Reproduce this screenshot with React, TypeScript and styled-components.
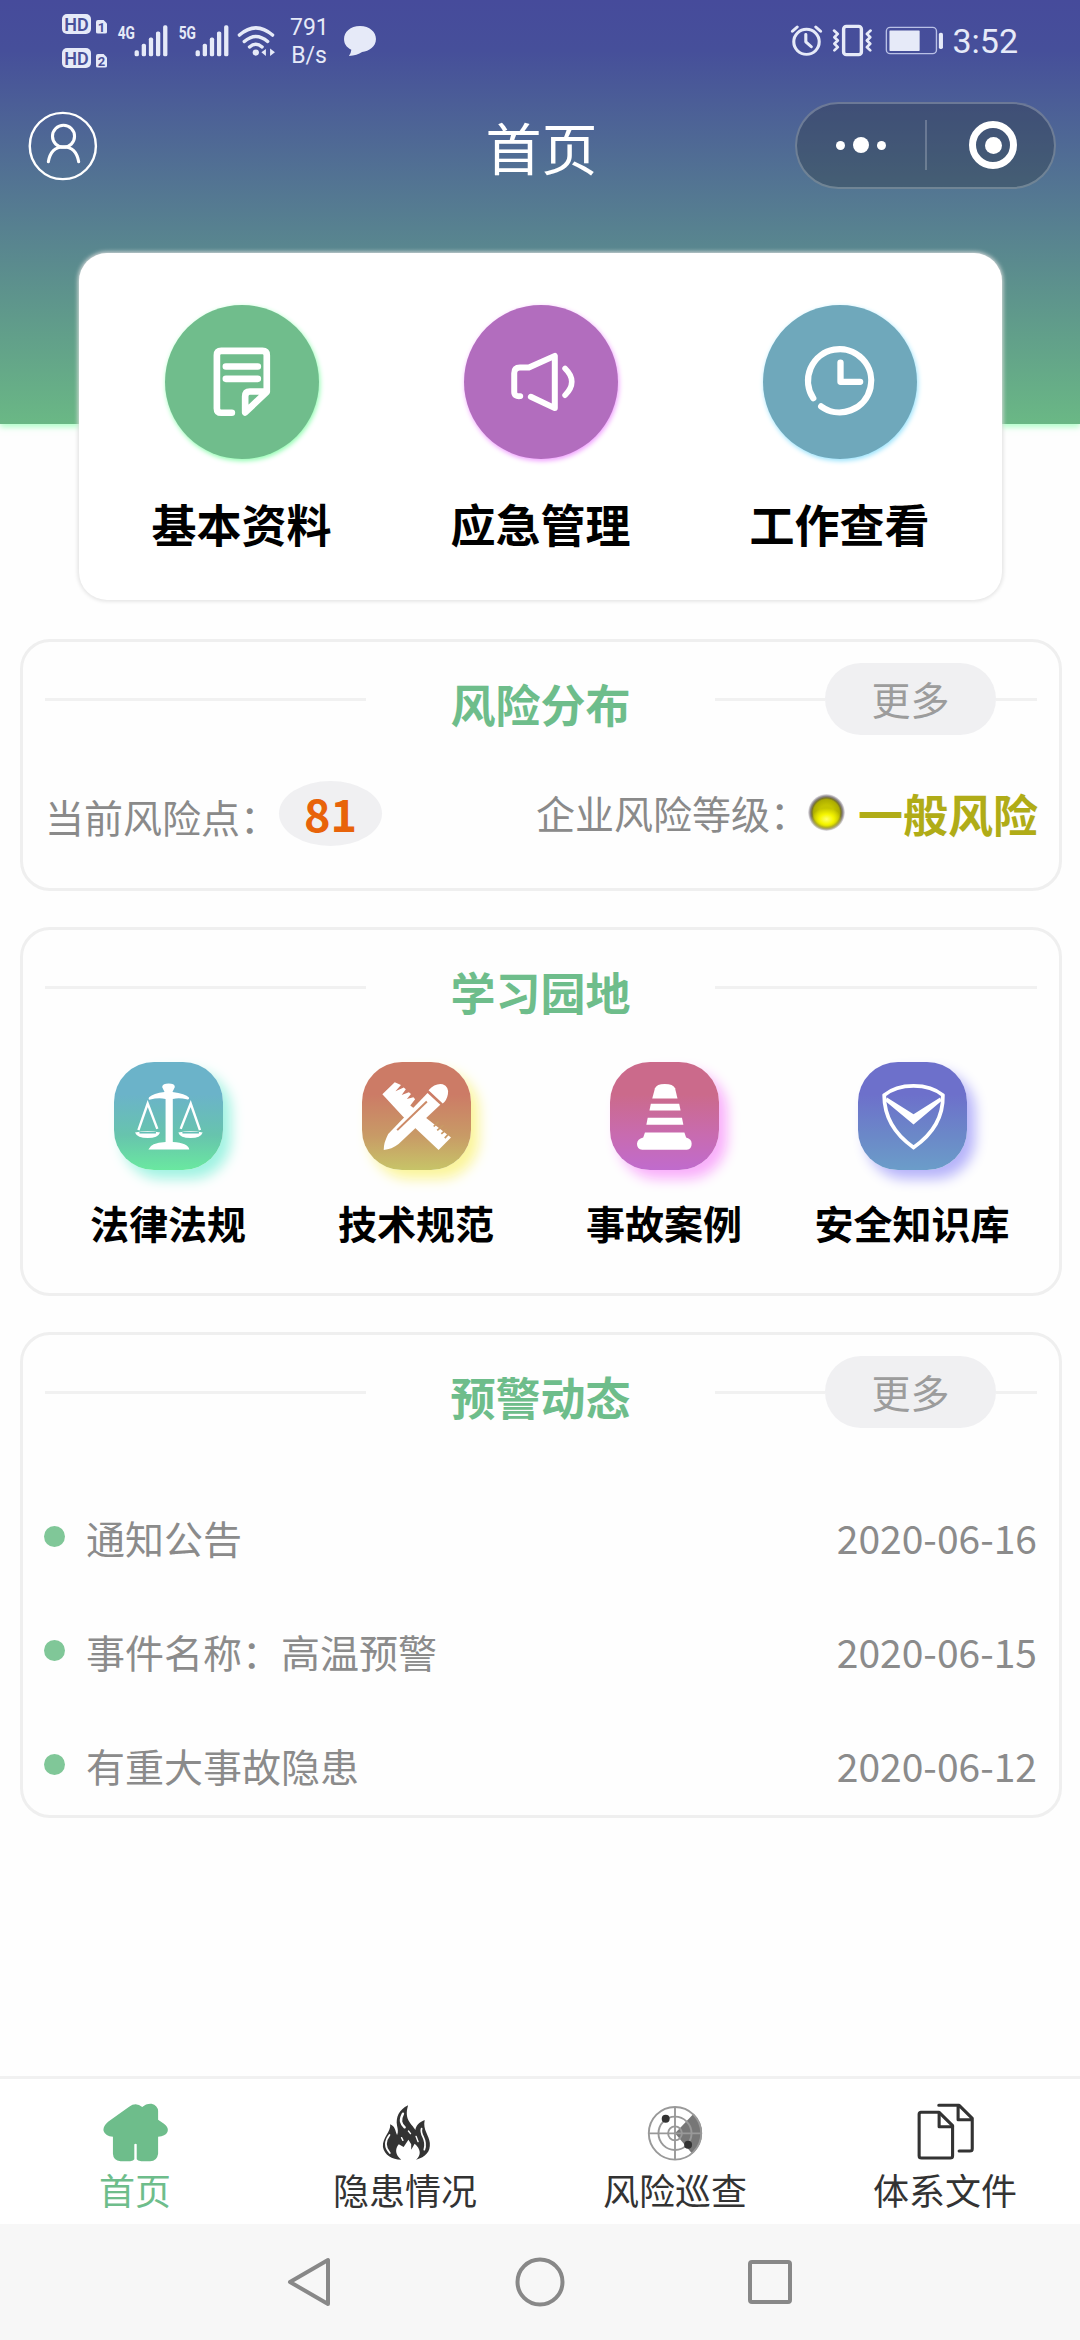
import React from "react";
import styled, { createGlobalStyle } from "styled-components";

const GREEN = "#6ebd8b";

const GlobalStyle = createGlobalStyle`
  * { box-sizing: border-box; }
  body {
    margin: 0;
    background: #fefefe;
    font-family: "Noto Sans CJK SC", "Noto Sans", sans-serif;
  }
`;

const Page = styled.div`
  width: 1080px;
  height: 2340px;
  display: flex;
  flex-direction: column;
  background: #fefefe;
  overflow: hidden;
`;

/* ---------- header ---------- */

const Header = styled.header`
  flex: none;
  height: 424px;
  background: linear-gradient(180deg, #464b9b 0%, #464f9a 12%, #6ab885 100%);
  box-shadow: 0 3px 6px rgba(140, 255, 175, 0.7);
`;

const StatusBar = styled.div`
  height: 81px;
  padding: 0 62px;
  display: flex;
  justify-content: space-between;
  align-items: center;
  color: #e6eaf8;
  font-family: Roboto, sans-serif;
`;

const StatusGroup = styled.div`
  display: flex;
  align-items: center;
`;

const StatusIcon = styled.svg.attrs({ preserveAspectRatio: "none" })<{ $gap?: number }>`
  display: block;
  flex: none;
  overflow: visible;
  margin-left: ${(p) => p.$gap ?? 0}px;
`;

const HdStack = styled.div`
  display: flex;
  flex-direction: column;
  gap: 14px;
`;

const HdRow = styled.div`
  display: flex;
  align-items: flex-end;
  gap: 5px;
  height: 20px;
`;

const HdBadge = styled.span`
  width: 29px;
  height: 20px;
  border-radius: 5px;
  background: #e6eaf8;
  color: #4a5199;
  font-size: 18px;
  font-weight: 600;
  line-height: 21px;
  text-align: center;
`;

const SimBadge = styled.span`
  width: 11px;
  height: 14px;
  border-radius: 2px;
  background: #e6eaf8;
  clip-path: polygon(0 0, 65% 0, 100% 28%, 100% 100%, 0 100%);
  color: #4a5199;
  font-size: 13px;
  font-weight: 700;
  line-height: 15px;
  text-align: center;
`;

const NetSpeed = styled.div`
  width: 38px;
  margin-left: 14px;
  padding-top: 2px;
  font-size: 23px;
  line-height: 28px;
  text-align: center;
`;

const Clock = styled.span`
  margin-left: 8px;
  font-size: 34px;
  line-height: 40px;
`;

const NavBar = styled.div`
  display: grid;
  grid-template-columns: 1fr auto 1fr;
  align-items: center;
  height: 130px;
  padding: 0 24px 0 27px;
`;

const Title = styled.h1`
  margin: 0;
  color: #fff;
  font-size: 56px;
  font-weight: 400;
  line-height: 80px;
`;

const Capsule = styled.div`
  justify-self: end;
  display: grid;
  grid-template-columns: 1fr 2px 1fr;
  align-items: center;
  justify-items: center;
  width: 261px;
  height: 87px;
  margin-bottom: 2px;
  border: 2px solid rgba(255, 255, 255, 0.24);
  border-radius: 44px;
  background: rgba(40, 50, 55, 0.33);
`;

const CapsuleDivider = styled.i`
  width: 2px;
  height: 50px;
  background: rgba(255, 255, 255, 0.22);
`;

const Dots = styled.div`
  display: flex;
  align-items: center;
  gap: 8px;
  &::before, &::after, i {
    content: "";
    width: 9px;
    height: 9px;
    border-radius: 50%;
    background: #fff;
  }
  i { width: 16px; height: 16px; }
`;

const Target = styled.div`
  display: flex;
  align-items: center;
  justify-content: center;
  width: 48px;
  height: 48px;
  margin-left: 6px;
  border: 7px solid #fff;
  border-radius: 50%;
  &::after {
    content: "";
    width: 17px;
    height: 17px;
    border-radius: 50%;
    background: #fff;
  }
`;

/* ---------- quick entries ---------- */

const QuickCard = styled.section`
  flex: none;
  display: grid;
  grid-template-columns: repeat(3, 299px);
  justify-content: center;
  width: 923px;
  height: 347px;
  margin: -171px auto 0 79px;
  padding-top: 52px;
  border-radius: 28px;
  background: #fff;
  box-shadow: 0 0 4px 1px #dedede;
`;

const QuickItem = styled.div`
  display: flex;
  flex-direction: column;
  align-items: center;
`;

const QuickDisc = styled.div<{ $color: string; $glow: string }>`
  width: 154px;
  height: 154px;
  border-radius: 50%;
  background: ${(p) => p.$color};
  box-shadow: 1px 2px 5px ${(p) => p.$glow};
`;

const QuickLabel = styled.span`
  margin-top: 35px;
  color: #000;
  font-size: 45px;
  font-weight: 700;
  line-height: 60px;
`;

/* ---------- cards ---------- */

const Card = styled.section<{ $height: number; $top: number }>`
  flex: none;
  width: 1042px;
  height: ${(p) => p.$height}px;
  margin: ${(p) => p.$top}px 0 0 20px;
  padding: 21px 22px 0;
  border: 3px solid #efefef;
  border-radius: 30px;
  background: #fefefe;
`;

const CardHead = styled.div`
  display: grid;
  grid-template-columns: 321px 1fr 322px;
  align-items: center;
  height: 72px;
`;

const Rule = styled.i`
  flex: 1;
  height: 3px;
  background: #f1f1f1;
`;

const RuleEnd = styled(Rule)`
  flex: 0 0 41px;
`;

const CardTitle = styled.h2`
  margin: 0;
  padding-top: 9px;
  color: ${GREEN};
  font-size: 45px;
  font-weight: 700;
  line-height: 60px;
  text-align: center;
`;

const HeadRight = styled.div`
  display: flex;
  align-items: center;
`;

const MoreButton = styled.button`
  width: 171px;
  height: 72px;
  padding: 0 0 2px;
  border: 0;
  border-radius: 36px;
  background: #f0f0f2;
  color: #9c9c9c;
  font: inherit;
  font-size: 39px;
  line-height: 70px;
`;

const RiskRow = styled.div`
  display: flex;
  align-items: center;
  height: 65px;
  margin-top: 46px;
`;

const RiskLabel = styled.span<{ $drop: number }>`
  padding-top: ${(p) => p.$drop}px;
  color: #8a8a8a;
  font-size: 39px;
  line-height: 50px;
`;

const RiskCount = styled.span`
  width: 103px;
  height: 65px;
  border-radius: 50%;
  background: #f0f0f2;
  color: #e8630a;
  font-size: 45px;
  font-weight: 700;
  line-height: 63px;
  text-align: center;
`;

const RiskLevel = styled.div`
  display: flex;
  align-items: center;
  margin-left: auto;
  margin-right: -1px;
  padding-bottom: 3px;
`;

const Lamp = styled.i`
  width: 37px;
  height: 37px;
  margin: 1px 13px 0 -1px;
  border-radius: 50%;
  background: radial-gradient(ellipse 42% 30% at 50% 68%, #ffff70 0%, #f6f600 45%, rgba(220, 220, 0, 0) 100%),
    radial-gradient(circle closest-side at 50% 50%, #c4c400 0 40%, #adad00 70%, #77732c 79%, #8d878d 88%, rgba(200, 195, 200, 0.25) 100%);
`;

const RiskText = styled.strong`
  padding-top: 3px;
  color: #b0ac17;
  font-size: 45px;
  font-weight: 700;
  line-height: 60px;
`;

const StudyGrid = styled.div`
  display: grid;
  grid-template-columns: repeat(4, 248px);
`;

const StudyBlock = styled(StudyGrid)`
  margin: 39px 0 0 -1px;
`;

const StudyItem = styled.div`
  display: flex;
  flex-direction: column;
  align-items: center;
`;

const StudyTile = styled.div<{ $from: string; $mid: string; $to: string; $glow: string }>`
  width: 109px;
  height: 108px;
  border-radius: 40px;
  background: linear-gradient(180deg, ${(p) => p.$from} 0%, ${(p) => p.$from} 30%, ${(p) => p.$mid} 68%, ${(p) => p.$to} 100%);
  box-shadow: 8px 9px 13px ${(p) => p.$glow};
`;

const TileIcon = styled.svg.attrs({ preserveAspectRatio: "none" })`
  display: block;
  width: 109px;
  height: 108px;
`;

const StudyLabel = styled.span`
  margin-top: 28px;
  color: #000;
  font-size: 39px;
  font-weight: 700;
  line-height: 48px;
`;

const NoticeList = styled.ul`
  display: flex;
  flex-direction: column;
  gap: 54px;
  margin: 79px 0 0;
  padding: 0;
  list-style: none;
`;

const Notice = styled.li`
  display: flex;
  align-items: center;
  height: 60px;
  color: #8b8b8b;
  font-size: 39px;
  line-height: 60px;
  &::before {
    content: "";
    width: 21px;
    height: 21px;
    margin: 0 21px 2px -1px;
    border-radius: 50%;
    background: #80c798;
  }
`;

const NoticeDate = styled.time`
  margin-left: auto;
`;

/* ---------- bottom bars ---------- */

const TabBar = styled.nav`
  flex: none;
  display: grid;
  grid-template-columns: repeat(4, 1fr);
  height: 148px;
  margin-top: auto;
  border-top: 3px solid #f1f1f1;
  background: #fff;
`;

const Tab = styled.div<{ $active?: boolean }>`
  display: flex;
  flex-direction: column;
  align-items: center;
  padding-top: 24px;
  color: ${(p) => (p.$active ? GREEN : "#333")};
  font-size: 36px;
  line-height: 44px;
`;

const TabIcon = styled.svg.attrs({ preserveAspectRatio: "none" })`
  display: block;
  width: 70px;
  height: 60px;
  margin-bottom: 4px;
`;

const SystemBar = styled.div`
  flex: none;
  display: flex;
  justify-content: center;
  align-items: center;
  gap: 180px;
  height: 116px;
  background: #f7f7f7;
`;

/* ---------- drawings ---------- */

const Signal = ({ label, gap }: { label: string; gap: number }) => (
  <StatusIcon $gap={gap} width="51" height="33" viewBox="340 70 148 98" fill="#e6eaf8">
    <text x="342" y="115" fontSize="54" fontWeight="700" textLength="50" lengthAdjust="spacingAndGlyphs">
      {label}
    </text>
    {[148, 129, 110, 92, 74].map((top, i) => (
      <rect key={top} x={391 + i * 20.7} y={top} width="12.5" height={166 - top} rx="5" />
    ))}
  </StatusIcon>
);

const stroke = (width: number, color = "#fff") => ({
  fill: "none",
  stroke: color,
  strokeWidth: width,
  strokeLinecap: "round" as const,
  strokeLinejoin: "round" as const,
});

const DocIcon = () => (
  <svg width="154" height="154" viewBox="315 225 463 463" {...stroke(20)}>
    <path d="M516 549H484Q471 549 471 536V376Q471 363 484 363H608Q621 363 621 376V486L556 548V500Q556 485 570 485H618" />
    <path d="M498 410H594M498 447H594" />
  </svg>
);

const HornIcon = () => (
  <svg width="154" height="154" viewBox="1212 225 463 463" {...stroke(18)}>
    <path d="M1381 499Q1363 501 1363 486V430Q1363 413 1380 413H1407L1485 378V535L1413 501" />
    <path d="M1516 416Q1556 455 1516 496" strokeWidth="17" />
  </svg>
);

const ClockIcon = () => (
  <svg width="154" height="154" viewBox="610 225 463 463" {...stroke(19)}>
    <path d="M761 505A95 95 0 1 1 785 530" />
    <path d="M843 398V456H902" />
  </svg>
);

const ScaleIcon = () => (
  <TileIcon viewBox="330 455 317 325" fill="#fff">
    <path d="M470 530Q472 520 489 520Q506 520 507 530L500 545Q538 550 548 562Q550 570 541 567Q520 562 501 566V696Q545 699 549 718H430Q436 699 480 696V566Q458 562 436 568Q428 570 432 561Q444 549 477 545Z" />
    <path d="M401 660L428 580L456 656M524 656L553 580L580 660" fill="none" stroke="#fff" strokeWidth="7" />
    <path d="M391 667Q428 660 464 667Q458 684 428 684Q398 684 391 667ZM517 667Q553 660 588 667Q582 684 553 684Q522 684 517 667Z" />
    <path d="M404 668H452M529 668H577" stroke="#62beb6" strokeWidth="4" />
  </TileIcon>
);

const ToolsIcon = () => (
  <TileIcon viewBox="1050 455 316 325" fill="#fff">
    <path d="M1109 552L1145 516L1163 524L1147 543L1171 532L1177 537L1165 554L1186 546L1192 551L1180 566L1199 561L1204 567L1190 586L1308 682L1272 720L1168 618Z" />
    <path d="M1286 645L1268 661M1296 656L1280 671M1303 669L1290 684M1272 634L1258 649" stroke="#c99a66" strokeWidth="5" />
    <path d="M1240 548L1277 584L1156 702Q1136 718 1113 720Q1112 700 1126 672Z" />
    <path d="M1243 540Q1262 518 1284 522Q1303 530 1299 552Q1296 570 1284 580Z" />
    <path d="M1152 660L1238 574" stroke="#cc8a67" strokeWidth="6" />
  </TileIcon>
);

const ConeIcon = () => (
  <TileIcon viewBox="203 455 315 325" fill="#fff">
    <path d="M325 565L333 534Q338 521 361 521Q386 521 391 534L398 565Z" />
    <path d="M321 581H403L407 601H317ZM312 623H411L415 644H308Z" />
    <path d="M304 667H418L423 682Q439 686 439 701Q439 718 425 719H296Q281 718 281 701Q282 686 299 682Z" />
  </TileIcon>
);

const ShieldIcon = () => (
  <TileIcon viewBox="922 455 316 325">
    <path d="M998 555Q1030 527 1083 527Q1136 527 1168 555Q1170 650 1083 712Q998 650 998 555Z" {...stroke(11)} strokeLinejoin="miter" />
    <path d="M1006 562L1083 612L1160 562L1164 572L1083 643L1001 572Z" fill="#fff" />
  </TileIcon>
);

const HomeIcon = () => (
  <TabIcon viewBox="290.5 128 203 180" fill={GREEN}>
    <path d="M375 139Q395 124 413 140Q424 129 440 130Q458 135 459 152V178L476 190Q491 202 486 215Q480 228 459 229V280Q456 302 436 303H410Q399 301 397 297V252Q394 248 390 252V297Q388 301 378 303H350Q329 300 328 280V229Q306 228 301 212Q298 199 314 184Z" />
  </TabIcon>
);

const FireIcon = () => (
  <TabIcon viewBox="1074.5 128 203 180" fill="#333">
    <path d="M1185 135C1158 148 1149 172 1153 196C1155 206 1157 214 1153 224C1148 214 1148 198 1133 192C1136 214 1110 232 1112 260C1116 284 1138 298 1165 298C1148 284 1146 266 1158 252L1172 260L1186 238L1194 252V268L1204 250C1222 266 1224 284 1208 298C1236 290 1250 274 1248 248C1246 224 1227 210 1233 179C1216 186 1208 196 1206 209C1196 190 1172 180 1185 135Z" />
    <g fill="none" stroke="#fff" strokeLinecap="round" strokeWidth="5">
      <path d="M1170 160C1160 180 1164 190 1175 201" strokeWidth="7" />
      <path d="M1131 224C1116 244 1118 262 1132 278" />
      <path d="M1224 205C1218 226 1243 236 1232 268" />
      <path d="M1166 232L1170 240M1186 212L1192 220M1208 228L1214 244" strokeWidth="4" />
    </g>
  </TabIcon>
);

const RadarIcon = () => (
  <TabIcon viewBox="290.5 128 203 180">
    <path d="M392 219L446 160A78 80 0 0 1 442 280Z" fill="#777" />
    <g fill="none" stroke="#999" strokeWidth="5.5">
      <ellipse cx="392" cy="219" rx="76" ry="79" />
      <ellipse cx="392" cy="219" rx="48" ry="50" />
      <ellipse cx="392" cy="219" rx="20" ry="21" />
      <path d="M392 140V298M316 219H468" />
    </g>
    <ellipse cx="365" cy="175" rx="11.5" ry="12" fill="#333" />
    <ellipse cx="430" cy="253" rx="11.5" ry="12" fill="#333" />
  </TabIcon>
);

const FilesIcon = () => (
  <TabIcon viewBox="1074.5 128 203 180" {...stroke(9, "#333")}>
    <path d="M1105 156H1159L1198 196V286Q1198 293 1191 293H1108Q1101 293 1101 286V162Q1101 156 1107 156Z" />
    <path d="M1159 158V199H1198" />
    <path d="M1158 135H1217L1255 174V265Q1255 272 1248 272H1217M1214 137V178H1253" />
  </TabIcon>
);

/* ---------- content ---------- */

const quickEntries = [
  { label: "基本资料", color: "#70bd8c", glow: "#8dfcae", icon: <DocIcon /> },
  { label: "应急管理", color: "#b26dbe", glow: "#f09cff", icon: <HornIcon /> },
  { label: "工作查看", color: "#6fa8bb", glow: "#96e2fc", icon: <ClockIcon /> },
];

const studyEntries = [
  { label: "法律法规", from: "#6bb3c9", mid: "#67c4ad", to: "#6ae8a0", glow: "#a0f3e2", icon: <ScaleIcon /> },
  { label: "技术规范", from: "#cc7b66", mid: "#c89a66", to: "#c7c468", glow: "#fbf59a", icon: <ToolsIcon /> },
  { label: "事故案例", from: "#cb6a8b", mid: "#c86bb0", to: "#c06bcd", glow: "#f9aefb", icon: <ConeIcon /> },
  { label: "安全知识库", from: "#6d70cb", mid: "#6b88c8", to: "#6b9dc9", glow: "#b6b3fa", icon: <ShieldIcon /> },
];

const notices = [
  { text: "通知公告", date: "2020-06-16" },
  { text: "事件名称：高温预警", date: "2020-06-15" },
  { text: "有重大事故隐患", date: "2020-06-12" },
];

const SectionHead = ({ title, more }: { title: string; more?: boolean }) => (
  <CardHead>
    <Rule />
    <CardTitle>{title}</CardTitle>
    <HeadRight>
      <Rule />
      {more && (
        <>
          <MoreButton>更多</MoreButton>
          <RuleEnd />
        </>
      )}
    </HeadRight>
  </CardHead>
);

export default function App() {
  return (
    <Page>
      <GlobalStyle />
      <Header>
        <StatusBar>
          <StatusGroup>
            <HdStack>
              <HdRow>
                <HdBadge>HD</HdBadge>
                <SimBadge>1</SimBadge>
              </HdRow>
              <HdRow>
                <HdBadge>HD</HdBadge>
                <SimBadge>2</SimBadge>
              </HdRow>
            </HdStack>
            <Signal label="4G" gap={10} />
            <Signal label="5G" gap={10} />
            <StatusIcon $gap={8} width="39" height="33" viewBox="688 70 112 98" {...stroke(10, "#e6eaf8")}>
              <path d="M695 103Q742 60 790 103M709 122Q742 92 776 122M724 138Q742 122 760 138" />
              <g fill="#e6eaf8" stroke="none">
                <circle cx="742" cy="155" r="9" />
                <path d="M758 154l13-10v21zM783 143v22l14-11z" />
              </g>
            </StatusIcon>
            <NetSpeed>
              791
              <br />
              B/s
            </NetSpeed>
            <StatusIcon $gap={15} width="34" height="32" viewBox="995 75 98 96" fill="#e6eaf8">
              <path d="M1044 78C1072 78 1090 96 1090 117C1090 140 1070 154 1050 156Q1036 166 1012 168Q1018 160 1019 149C1004 142 998 130 998 117C998 96 1016 78 1044 78Z" />
            </StatusIcon>
          </StatusGroup>
          <StatusGroup>
            <StatusIcon width="33" height="33" viewBox="722 70 96 100" {...stroke(9, "#e6eaf8")}>
              <ellipse cx="770" cy="124" rx="37" ry="38" />
              <path d="M768 102V124L784 139M729 92L743 79M797 79L811 92" />
            </StatusIcon>
            <StatusIcon $gap={9} width="41" height="33" viewBox="845 70 120 100" {...stroke(10, "#e6eaf8")}>
              <rect x="879" y="77" width="52" height="86" rx="8" />
              <path d="M851 90l11 10-10 10 10 10-10 10 10 10-10 10M958 90l-11 10 10 10-10 10 10 10-10 10 10 10" strokeWidth="8" />
            </StatusIcon>
            <StatusIcon $gap={12} width="59" height="29" viewBox="1003 78 172 86" fill="#e6eaf8">
              <rect x="1007" y="82" width="146" height="78" rx="11" fill="none" stroke="#b9c0e6" strokeWidth="4" />
              <rect x="1016" y="91" width="88" height="61" rx="2" />
              <rect x="1160" y="98" width="12" height="48" rx="5" />
            </StatusIcon>
            <Clock>3:52</Clock>
          </StatusGroup>
        </StatusBar>
        <NavBar>
          <svg width="72" height="70" viewBox="79 336.5 209 209" preserveAspectRatio="none" {...stroke(7)}>
            <ellipse cx="183" cy="441" rx="96" ry="99" />
            <ellipse cx="185" cy="412" rx="32" ry="33" strokeWidth="9" />
            <path d="M141 488Q148 444 185 443Q222 444 229 488" strokeWidth="9" />
          </svg>
          <Title>首页</Title>
          <Capsule>
            <Dots>
              <i />
            </Dots>
            <CapsuleDivider />
            <Target />
          </Capsule>
        </NavBar>
      </Header>

      <QuickCard>
        {quickEntries.map((q) => (
          <QuickItem key={q.label}>
            <QuickDisc $color={q.color} $glow={q.glow}>
              {q.icon}
            </QuickDisc>
            <QuickLabel>{q.label}</QuickLabel>
          </QuickItem>
        ))}
      </QuickCard>

      <Card $height={252} $top={39}>
        <SectionHead title="风险分布" more />
        <RiskRow>
          <RiskLabel $drop={5}>当前风险点：</RiskLabel>
          <RiskCount>81</RiskCount>
          <RiskLevel>
            <RiskLabel $drop={0}>企业风险等级：</RiskLabel>
            <Lamp />
            <RiskText>一般风险</RiskText>
          </RiskLevel>
        </RiskRow>
      </Card>

      <Card $height={369} $top={36}>
        <SectionHead title="学习园地" />
        <StudyBlock>
          {studyEntries.map((s) => (
            <StudyItem key={s.label}>
              <StudyTile $from={s.from} $mid={s.mid} $to={s.to} $glow={s.glow}>
                {s.icon}
              </StudyTile>
              <StudyLabel>{s.label}</StudyLabel>
            </StudyItem>
          ))}
        </StudyBlock>
      </Card>

      <Card $height={486} $top={36}>
        <SectionHead title="预警动态" more />
        <NoticeList>
          {notices.map((n) => (
            <Notice key={n.date}>
              {n.text}
              <NoticeDate>{n.date}</NoticeDate>
            </Notice>
          ))}
        </NoticeList>
      </Card>

      <TabBar>
        <Tab $active>
          <HomeIcon />
          首页
        </Tab>
        <Tab>
          <FireIcon />
          隐患情况
        </Tab>
        <Tab>
          <RadarIcon />
          风险巡查
        </Tab>
        <Tab>
          <FilesIcon />
          体系文件
        </Tab>
      </TabBar>
      <SystemBar>
        <svg width="50" height="50" viewBox="0 0 50 50" {...stroke(4, "#888")}>
          <path d="M43 3V47L5 25Z" />
        </svg>
        <svg width="50" height="50" viewBox="0 0 50 50" {...stroke(4, "#888")}>
          <circle cx="25" cy="25" r="22.5" />
        </svg>
        <svg width="50" height="50" viewBox="0 0 50 50" {...stroke(4, "#888")}>
          <rect x="5" y="5" width="40" height="40" rx="2" />
        </svg>
      </SystemBar>
    </Page>
  );
}
